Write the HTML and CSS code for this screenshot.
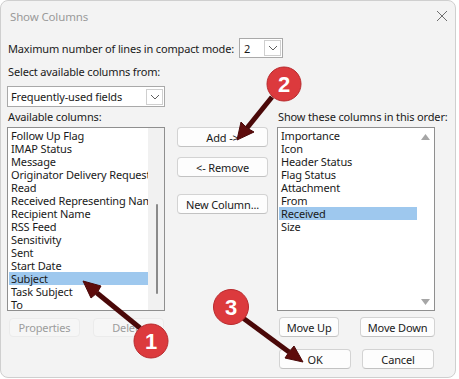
FILE: index.html
```html
<!DOCTYPE html>
<html lang="en">
<head>
    <meta charset="UTF-8">
    <title>Show Columns</title>
    <link rel="stylesheet" href="styles.css">
</head>
<body>
    <div class="window">
        <div class="titlebar">
            <span class="title">Show Columns</span>
            <svg class="close" width="12" height="12" viewBox="0 0 12 12">
                <path d="M1 1 L11 11 M11 1 L1 11" stroke="#6e6e6e" stroke-width="1"/>
            </svg>
        </div>

        <div class="content">
            <div class="row-lines">
                <span>Maximum number of lines in compact mode:</span>
                <div class="select small">
                    <span class="select-value">2</span>
                    <span class="select-btn">
                        <svg width="10" height="6" viewBox="0 0 10 6"><polyline points="1,1 5,5 9,1" fill="none" stroke="#5f5f5f" stroke-width="1"/></svg>
                    </span>
                </div>
            </div>

            <div class="label label-from">Select available columns from:</div>
            <div class="select wide">
                <span class="select-value">Frequently-used fields</span>
                <span class="select-btn">
                    <svg width="10" height="6" viewBox="0 0 10 6"><polyline points="1,1 5,5 9,1" fill="none" stroke="#5f5f5f" stroke-width="1"/></svg>
                </span>
            </div>

            <div class="panes">
                <div class="col-left">
                    <div class="label">Available columns:</div>
                    <div class="listbox">
                        <ul class="items">
                            <li>Follow Up Flag</li>
                            <li>IMAP Status</li>
                            <li>Message</li>
                            <li>Originator Delivery Requested</li>
                            <li>Read</li>
                            <li>Received Representing Name</li>
                            <li>Recipient Name</li>
                            <li>RSS Feed</li>
                            <li>Sensitivity</li>
                            <li>Sent</li>
                            <li>Start Date</li>
                            <li class="selected">Subject</li>
                            <li>Task Subject</li>
                            <li>To</li>
                        </ul>
                        <div class="scrollbar track">
                            <div class="thumb"></div>
                        </div>
                    </div>
                    <div class="btn-row left-btns">
                        <button class="btn disabled">Properties</button>
                        <button class="btn disabled">Delete</button>
                    </div>
                </div>

                <div class="col-mid">
                    <button class="btn">Add -&gt;</button>
                    <button class="btn btn-remove">&lt;- Remove</button>
                    <button class="btn btn-new">New Column...</button>
                </div>

                <div class="col-right">
                    <div class="label">Show these columns in this order:</div>
                    <div class="listbox">
                        <ul class="items">
                            <li>Importance</li>
                            <li>Icon</li>
                            <li>Header Status</li>
                            <li>Flag Status</li>
                            <li>Attachment</li>
                            <li>From</li>
                            <li class="selected">Received</li>
                            <li>Size</li>
                        </ul>
                        <div class="scrollbar arrows">
                            <svg width="9" height="6" viewBox="0 0 9 6"><polygon points="0,6 4.5,0 9,6" fill="#a6a6a6"/></svg>
                            <svg width="9" height="6" viewBox="0 0 9 6"><polygon points="0,0 4.5,6 9,0" fill="#a6a6a6"/></svg>
                        </div>
                    </div>
                    <div class="btn-row move-btns">
                        <button class="btn btn-up">Move Up</button>
                        <button class="btn btn-down">Move Down</button>
                    </div>
                    <div class="btn-row ok-btns">
                        <button class="btn btn-ok">OK</button>
                        <button class="btn btn-ok">Cancel</button>
                    </div>
                </div>
            </div>
        </div>
    </div>

    <!-- callouts drawn over the dialog -->
    <svg class="callouts" width="459" height="379" viewBox="0 0 459 379">
        <g fill="#5e0c0c" stroke="#4a0808" stroke-width="1">
            <line x1="272" y1="97" x2="247" y2="128" stroke-width="5"/>
            <polygon points="237,140 254,132 247,128 241,122"/>
            <line x1="140" y1="328" x2="97" y2="293" stroke-width="5"/>
            <polygon points="83,281 101,286 97,293 91,298"/>
            <line x1="243" y1="318" x2="289" y2="352" stroke-width="5"/>
            <polygon points="303,362 285,358 289,352 294,346"/>
        </g>
        <g class="badge">
            <circle cx="284" cy="84" r="17"/>
            <text x="284" y="92">2</text>
            <circle cx="151" cy="341" r="17"/>
            <text x="151" y="349">1</text>
            <circle cx="231" cy="307" r="17.5"/>
            <text x="231" y="315">3</text>
        </g>
    </svg>
</body>
</html>
```
FILE: styles.css
```css
body {
    margin: 0;
    background: #ffffff;
    font-family: "Noto Sans", "Open Sans", sans-serif;
    font-size: 11px;
    letter-spacing: -0.15px;
    color: #1a1a1a;
    position: relative;
    width: 459px;
    height: 379px;
    overflow: hidden;
}

.window {
    box-sizing: border-box;
    width: 456px;
    height: 378px;
    background: #f3f3f3;
    border: 1px solid #cfcfcf;
    border-radius: 8px;
}

.titlebar {
    height: 30px;
    display: flex;
    align-items: center;
    justify-content: space-between;
    padding: 0 6px 0 9px;
}

.title {
    color: #9a9a9a;
    font-size: 11.5px;
}

.close {
    margin-right: 1px;
}

.content {
    padding-left: 6px;
}

.row-lines {
    display: flex;
    align-items: center;
    margin-top: 7px;
    height: 20px;
}

.row-lines span:first-child {
    padding-left: 1px;
    margin-right: 5px;
}

.label {
    line-height: 14px;
    padding-left: 1px;
    white-space: nowrap;
}

.label-from {
    margin-top: 7px;
}

.select {
    box-sizing: border-box;
    display: flex;
    align-items: center;
    justify-content: space-between;
    background: #ffffff;
    border: 1px solid #a9a9a9;
    height: 20px;
    padding: 0 1px 0 3px;
}

.select.small {
    width: 44px;
}

.select.wide {
    width: 158px;
    margin-top: 7px;
    height: 21px;
}

.select-btn {
    box-sizing: border-box;
    width: 17px;
    height: 16px;
    border: 1px solid #cfcfcf;
    display: flex;
    align-items: center;
    justify-content: center;
}

.panes {
    display: flex;
    margin-top: 3px;
}

.col-left,
.col-right {
    width: 158px;
}

.col-mid {
    width: 91px;
    margin: 0 9px 0 12px;
    padding-top: 17px;
    display: flex;
    flex-direction: column;
}

.listbox {
    box-sizing: border-box;
    height: 184px;
    margin-top: 3px;
    background: #ffffff;
    border: 1px solid #8f8f8f;
    padding: 1px;
    display: flex;
}

.items {
    list-style: none;
    margin: 0;
    padding: 0;
    flex: 1;
    overflow: hidden;
}

.items li {
    height: 13px;
    line-height: 13px;
    padding-left: 2px;
    white-space: nowrap;
}

.items li.selected {
    background: #9ec8ee;
}

.scrollbar {
    width: 16px;
}

.track {
    background: #f1f1f1;
    margin: -1px -1px -1px 0;
}

.thumb {
    width: 2px;
    height: 90px;
    margin: 76px 0 0 8px;
    background: #8a8a8a;
    border-radius: 1px;
}

.arrows {
    display: flex;
    flex-direction: column;
    justify-content: space-between;
    align-items: center;
    padding: 5px 0 4px;
}

.btn {
    box-sizing: border-box;
    font-family: inherit;
    font-size: 11px;
    letter-spacing: inherit;
    color: #1a1a1a;
    background: #fdfdfd;
    border: 1px solid #d3d3d3;
    border-bottom-color: #c2c2c2;
    border-radius: 4px;
    height: 20px;
    padding: 0;
    white-space: nowrap;
}

.col-mid .btn {
    width: 91px;
}

.btn-remove {
    margin-top: 10px;
}

.btn-new {
    margin-top: 17px;
}

.btn.disabled {
    background: #f6f6f6;
    border-color: #ebebeb;
    color: #9c9c9c;
    width: 71px;
    height: 19px;
}

.btn-row {
    display: flex;
}

.left-btns {
    margin-top: 7px;
    padding: 0 1px 0 2px;
    justify-content: space-between;
}

.move-btns {
    margin-top: 6px;
    padding-left: 2px;
    gap: 21px;
}

.btn-up {
    width: 62px;
}

.btn-down {
    width: 77px;
}

.ok-btns {
    margin-top: 12px;
    padding-left: 2px;
    gap: 11px;
}

.btn-ok {
    width: 72px;
}

.callouts {
    position: absolute;
    left: 0;
    top: 0;
}

.badge circle {
    fill: #dc3a3d;
    stroke: #b82a2d;
    stroke-width: 1;
}

.badge text {
    fill: #ffffff;
    font-family: "Liberation Sans", Arial, sans-serif;
    font-weight: bold;
    font-size: 22px;
    letter-spacing: 0;
    text-anchor: middle;
}
```
